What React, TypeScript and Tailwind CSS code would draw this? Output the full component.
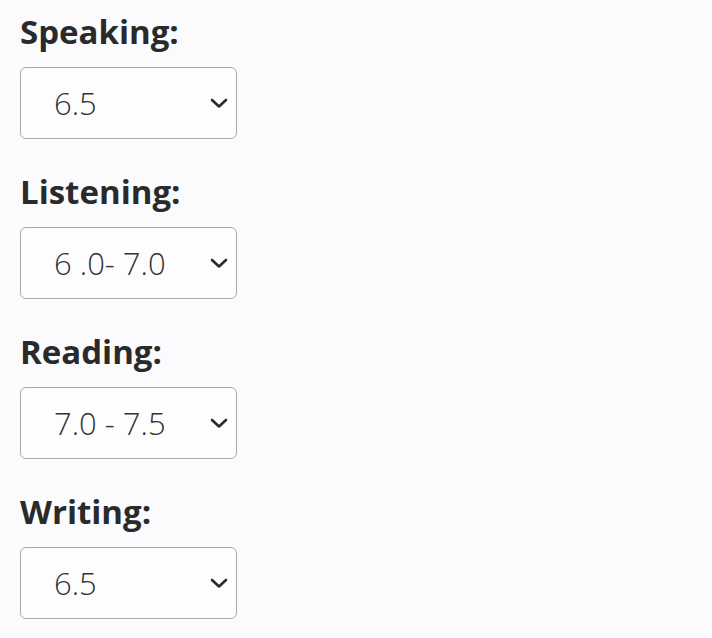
const fields = [
  { label: "Speaking:", value: "6.5" },
  { label: "Listening:", value: "6 .0- 7.0" },
  { label: "Reading:", value: "7.0 - 7.5" },
  { label: "Writing:", value: "6.5" },
];

function Chevron() {
  return (
    <svg width="18" height="12" viewBox="0 0 18 12" fill="none" className="shrink-0">
      <polyline points="2,3 9,9.5 16,3" stroke="#2b2b2b" strokeWidth="2.6" strokeLinecap="round" strokeLinejoin="round" />
    </svg>
  );
}

export default function App() {
  return (
    <div
      className="min-h-[638px] w-full bg-[#fbfbfd] pl-5 pt-[14px] flex flex-col gap-[35px]"
      style={{ fontFamily: '"Open Sans", "Noto Sans", sans-serif' }}
    >
      {fields.map((f) => (
        <div key={f.label} className="flex flex-col gap-[17px]">
          <div className="text-[33px] leading-[36px] font-bold text-[#2a2a2a]">{f.label}</div>
          <div className="w-[217px] h-[72px] rounded-[6px] border border-[#a9a9ab] bg-[#fdfdfe] flex items-center justify-between pl-[33px] pr-[8px]">
            <span className="text-[31px] font-[350] text-[#333333]">{f.value}</span>
            <Chevron />
          </div>
        </div>
      ))}
    </div>
  );
}
